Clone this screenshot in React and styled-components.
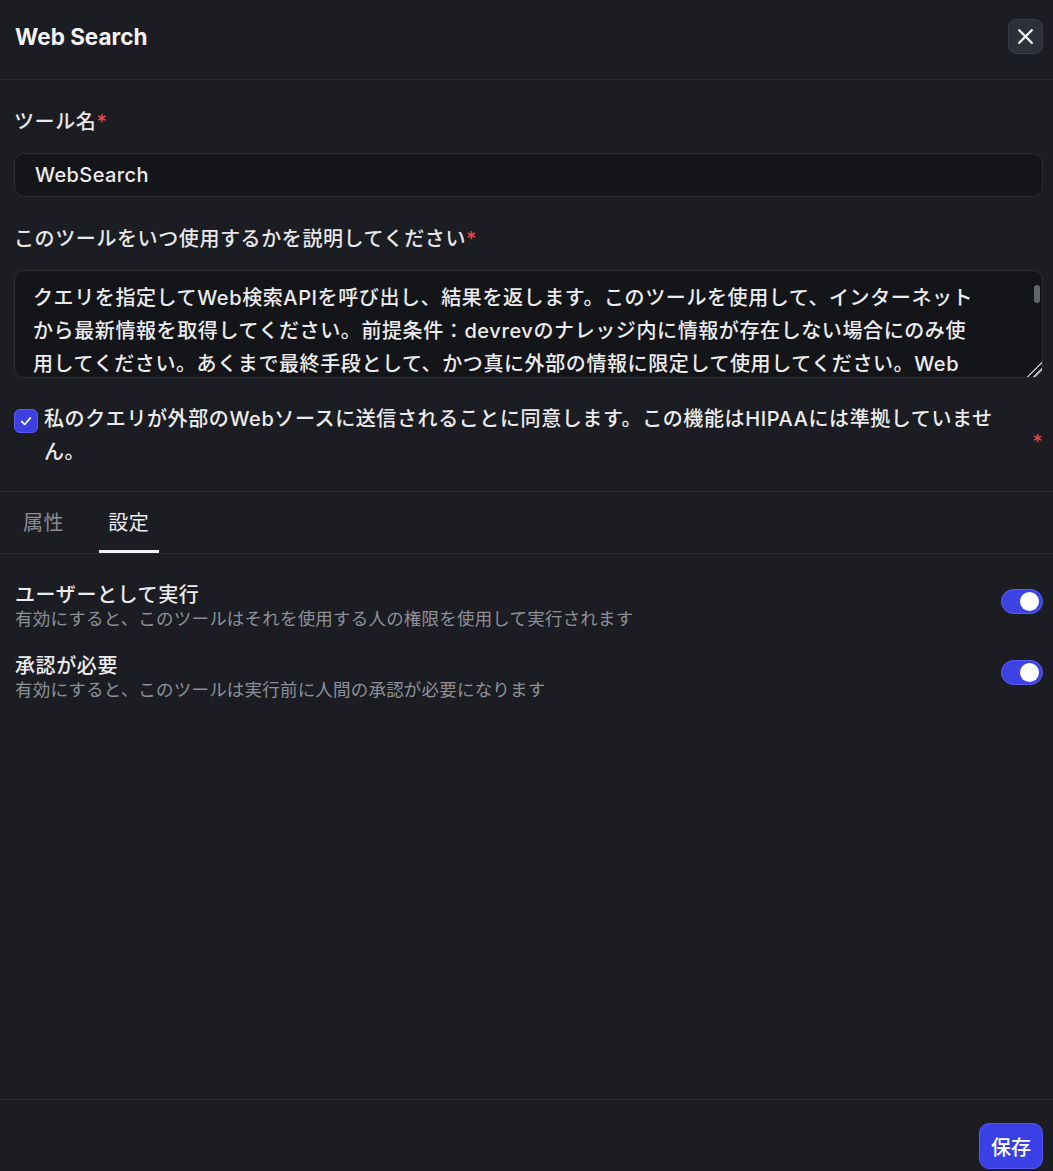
import React from "react";
import styled, { createGlobalStyle } from "styled-components";

const GlobalStyle = createGlobalStyle`
  html, body {
    margin: 0;
    padding: 0;
    background: #1c1d22;
  }
  body {
    font-family: "Inter", "Noto Sans CJK JP", sans-serif;
    color: #e8e8ea;
    letter-spacing: 0.6px;
  }
`;

const Page = styled.div`
  display: flex;
  flex-direction: column;
  min-height: 100vh;
  box-sizing: border-box;
`;

const Header = styled.div`
  display: flex;
  align-items: flex-start;
  justify-content: space-between;
  height: 80px;
  box-sizing: border-box;
  padding: 19px 10px 0 15px;
  border-bottom: 1px solid #2a2b31;
`;

const Title = styled.h1`
  margin: 0;
  font-size: 22.5px;
  line-height: 36px;
  font-weight: 700;
  letter-spacing: 0;
  color: #f4f4f6;
`;

const CloseButton = styled.button`
  display: flex;
  align-items: center;
  justify-content: center;
  width: 35px;
  height: 35px;
  padding: 0;
  border-radius: 8px;
  border: 1px solid #3a3c44;
  background: #2e3038;
  color: #f2f2f4;
`;

const Body = styled.div`
  display: flex;
  flex-direction: column;
  padding: 27px 10px 0 14px;
`;

const Label = styled.div`
  font-size: 20px;
  line-height: 30px;
  font-weight: 500;
  color: #e8e8ea;
  margin-bottom: 16px;
`;

const Required = styled.span`
  color: #e5484d;
`;

const TextInput = styled.input`
  box-sizing: border-box;
  height: 44px;
  padding: 0 20px;
  border-radius: 10px;
  border: 1px solid #2d2f35;
  background: #141519;
  color: #ececee;
  font-family: "Inter", "Noto Sans CJK JP", sans-serif;
  font-size: 20px;
  font-weight: 500;
  letter-spacing: 0.4px;
  outline: none;
  margin-bottom: 27px;
`;

const AreaWrap = styled.div`
  position: relative;
  display: flex;
  flex-direction: column;
  margin-bottom: 25px;
`;

const TextArea = styled.textarea`
  box-sizing: border-box;
  height: 108px;
  padding: 11px 64px 0 18px;
  border-radius: 10px;
  border: 1px solid #2d2f35;
  background: #141519;
  color: #ececee;
  font-family: "Inter", "Noto Sans CJK JP", sans-serif;
  font-size: 20px;
  line-height: 33px;
  font-weight: 500;
  letter-spacing: 0.6px;
  outline: none;
  overflow: hidden;
  resize: vertical;
  color-scheme: dark;

  &::-webkit-resizer {
    background: linear-gradient(
      135deg,
      transparent 48%,
      #b4b6bc 48%,
      #b4b6bc 56%,
      transparent 56%,
      transparent 70%,
      #b4b6bc 70%,
      #b4b6bc 78%,
      transparent 78%
    );
  }
`;

const ScrollThumb = styled.span`
  position: absolute;
  top: 15px;
  right: 3px;
  width: 6px;
  height: 18px;
  border-radius: 3px;
  background: #62646b;
  pointer-events: none;
`;

const ConsentRow = styled.div`
  display: flex;
  align-items: flex-start;
  gap: 6px;
  padding-bottom: 22px;
`;

const CheckBox = styled.span`
  flex: none;
  display: flex;
  align-items: center;
  justify-content: center;
  width: 24px;
  height: 24px;
  margin-top: 6px;
  box-sizing: border-box;
  border-radius: 6px;
  border: 1px solid #5a5df0;
  background: #3d40e0;
`;

const ConsentText = styled.div`
  flex: 1;
  font-size: 20px;
  line-height: 33px;
  font-weight: 500;
  color: #ececee;
  padding-right: 25px;
`;

const SideStar = styled.span`
  align-self: center;
  color: #e5484d;
  font-size: 20px;
  line-height: 20px;
  margin-top: 12px;
`;

const TabBar = styled.div`
  display: flex;
  gap: 25px;
  height: 63px;
  box-sizing: border-box;
  padding-left: 14px;
  border-top: 1px solid #2a2b31;
  border-bottom: 1px solid #2a2b31;
`;

const Tab = styled.div`
  display: flex;
  align-items: center;
  padding: 0 10px 0 9px;
  font-size: 20px;
  color: ${(p) => (p.$active ? "#ececef" : "#8b8d96")};
  border-bottom: 3px solid ${(p) => (p.$active ? "#f2f2f4" : "transparent")};
`;

const Settings = styled.div`
  display: flex;
  flex-direction: column;
  gap: 23px;
  padding: 28px 10px 0 15px;
`;

const SettingRow = styled.div`
  display: flex;
  align-items: flex-start;
  justify-content: space-between;
`;

const SettingText = styled.div`
  display: flex;
  flex-direction: column;
`;

const SettingTitle = styled.div`
  font-size: 20px;
  line-height: 26px;
  font-weight: 500;
  color: #ececee;
`;

const SettingDesc = styled.div`
  font-size: 17.5px;
  line-height: 22px;
  letter-spacing: 0.2px;
  color: #8e9099;
`;

const Toggle = styled.span`
  flex: none;
  display: flex;
  align-items: center;
  justify-content: ${(p) => (p.$on ? "flex-end" : "flex-start")};
  width: 42px;
  height: 25px;
  margin-top: 7px;
  padding: 0 3px;
  box-sizing: border-box;
  border-radius: 13px;
  border: 1px solid #5b5ff0;
  background: ${(p) => (p.$on ? "#3d42e3" : "#3a3c44")};
`;

const Knob = styled.span`
  width: 19px;
  height: 19px;
  border-radius: 50%;
  background: #ffffff;
`;

const Footer = styled.div`
  margin-top: auto;
  display: flex;
  justify-content: flex-end;
  padding: 23px 10px 2px;
  border-top: 1px solid #2a2b31;
`;

const SaveButton = styled.button`
  height: 46px;
  padding: 0 11px;
  border-radius: 10px;
  border: 1px solid #5458ee;
  background: #3a3fe6;
  color: #ffffff;
  font-family: "Inter", "Noto Sans CJK JP", sans-serif;
  font-size: 20px;
  font-weight: 500;
`;

const description =
  "クエリを指定してWeb検索APIを呼び出し、結果を返します。このツールを使用して、インターネットから最新情報を取得してください。前提条件：devrevのナレッジ内に情報が存在しない場合にのみ使用してください。あくまで最終手段として、かつ真に外部の情報に限定して使用してください。Web検索の結果には、タイトル、URL、スニペットが含まれます。検索クエリは具体的かつ簡潔に記述してください。個人情報や機密情報をクエリに含めないでください。取得した情報は回答の根拠として引用し、情報源を明示してください。複数の検索結果が矛盾する場合は、信頼性の高い情報源を優先してください。";

const settings = [
  {
    title: "ユーザーとして実行",
    desc: "有効にすると、このツールはそれを使用する人の権限を使用して実行されます",
  },
  {
    title: "承認が必要",
    desc: "有効にすると、このツールは実行前に人間の承認が必要になります",
  },
];

export default function App() {
  return (
    <Page>
      <GlobalStyle />
      <Header>
        <Title>Web Search</Title>
        <CloseButton aria-label="close">
          <svg width="17" height="17" viewBox="0 0 16 16" fill="none">
            <path
              d="M2 2L14 14M14 2L2 14"
              stroke="currentColor"
              strokeWidth="2"
              strokeLinecap="round"
            />
          </svg>
        </CloseButton>
      </Header>

      <Body>
        <Label>
          ツール名<Required>*</Required>
        </Label>
        <TextInput defaultValue="WebSearch" />
        <Label>
          このツールをいつ使用するかを説明してください<Required>*</Required>
        </Label>
        <AreaWrap>
          <TextArea readOnly defaultValue={description} />
          <ScrollThumb />
        </AreaWrap>
        <ConsentRow>
          <CheckBox>
            <svg width="14" height="14" viewBox="0 0 16 16" fill="none">
              <path
                d="M3 8.5L6.5 12L13 4.5"
                stroke="#ffffff"
                strokeWidth="2"
                strokeLinecap="round"
                strokeLinejoin="round"
              />
            </svg>
          </CheckBox>
          <ConsentText>
            私のクエリが外部のWebソースに送信されることに同意します。この機能はHIPAAには準拠していません。
          </ConsentText>
          <SideStar>*</SideStar>
        </ConsentRow>
      </Body>

      <TabBar>
        <Tab>属性</Tab>
        <Tab $active>設定</Tab>
      </TabBar>

      <Settings>
        {settings.map((s) => (
          <SettingRow key={s.title}>
            <SettingText>
              <SettingTitle>{s.title}</SettingTitle>
              <SettingDesc>{s.desc}</SettingDesc>
            </SettingText>
            <Toggle $on>
              <Knob />
            </Toggle>
          </SettingRow>
        ))}
      </Settings>

      <Footer>
        <SaveButton>保存</SaveButton>
      </Footer>
    </Page>
  );
}
